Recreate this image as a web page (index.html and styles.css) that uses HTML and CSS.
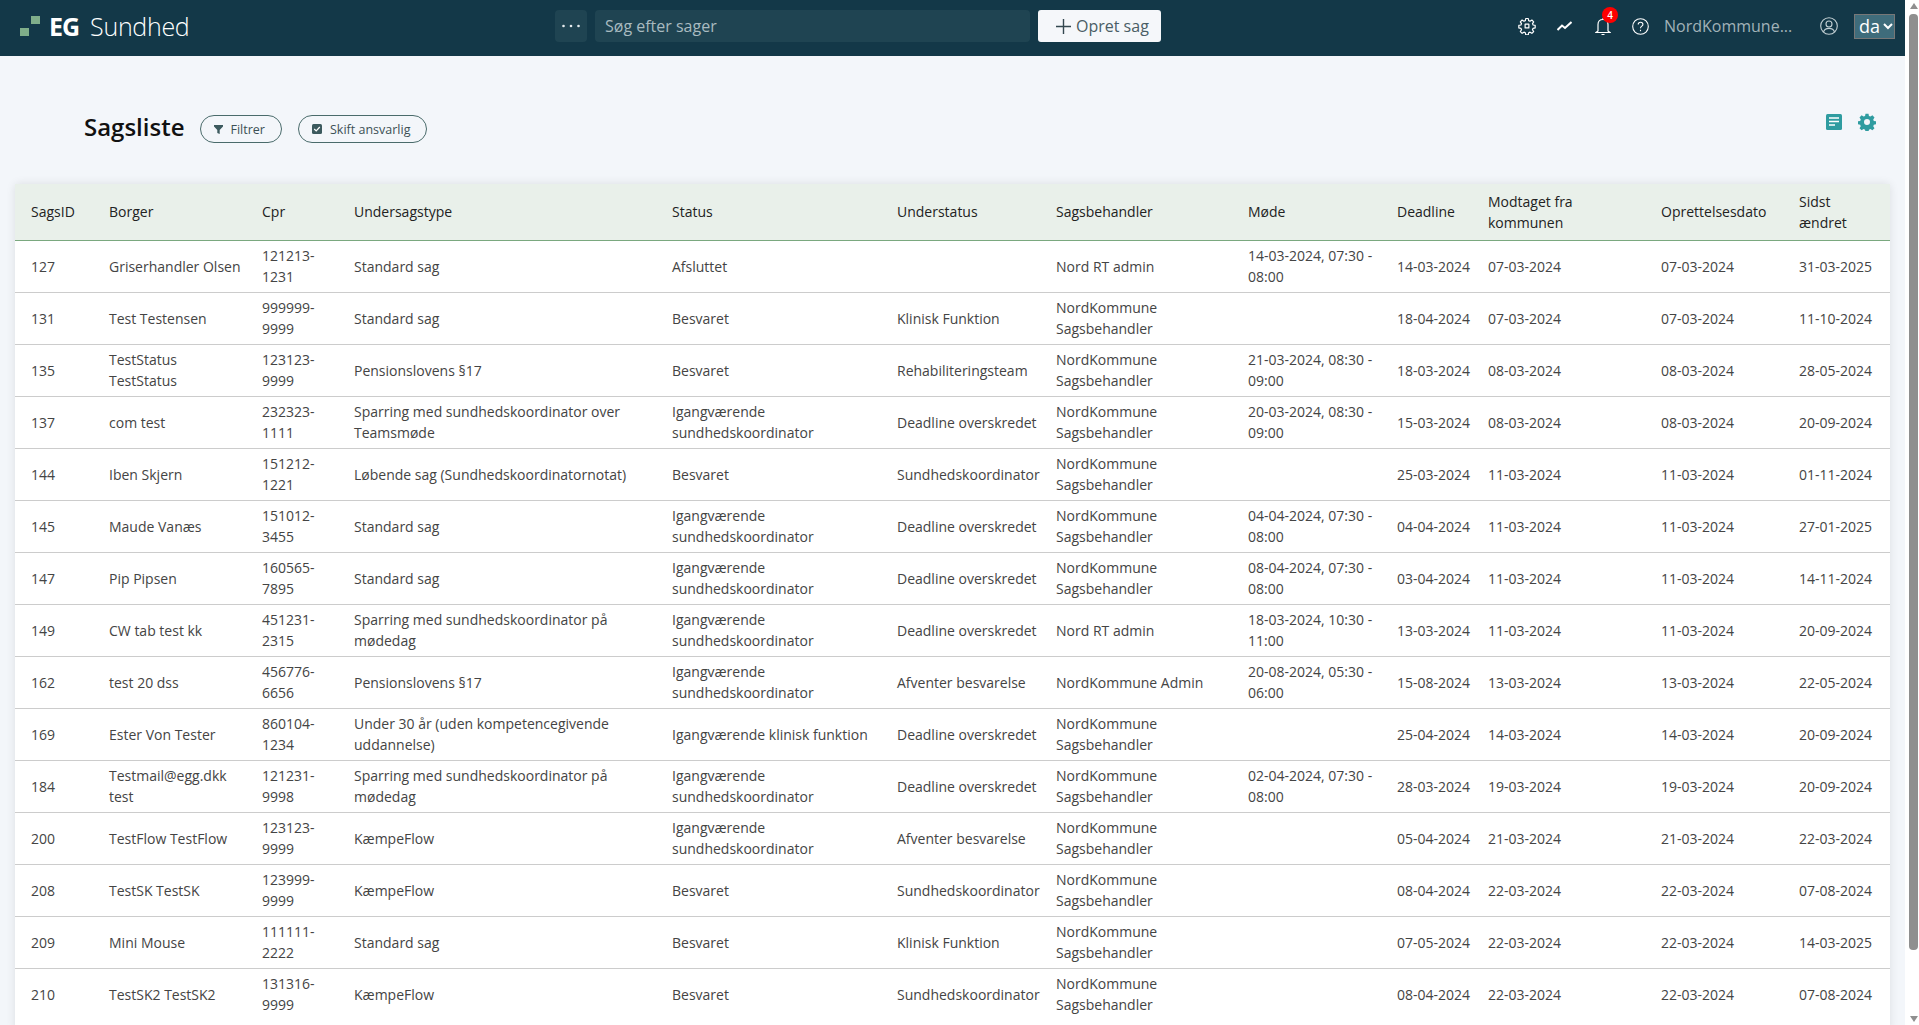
FILE: index.html
```html
<!DOCTYPE html>
<html lang="da">
<head>
    <meta charset="UTF-8">
    <title>Sagsliste</title>
    <link rel="stylesheet" href="styles.css">
</head>
<body>
<div class="app">
    <div class="page">
        <header class="topbar">
            <div class="logo">
                <svg class="logo-mark" width="20" height="20" viewBox="0 0 20 20"><rect x="0" y="12" width="9" height="8" fill="#7fae8a"/><rect x="11" y="0" width="9" height="8" fill="#7fae8a"/></svg>
                <span class="logo-eg">EG</span>
                <span class="logo-name">Sundhed</span>
            </div>
            <div class="search-area">
                <button class="dots">
                    <svg width="18" height="4" viewBox="0 0 18 4" fill="#e6ecee"><circle cx="1.500" cy="2" r="1.300"/><circle cx="9" cy="2" r="1.300"/><circle cx="16.500" cy="2" r="1.300"/></svg>
                </button>
                <div class="search">Søg efter sager</div>
                <button class="create">
                    <svg width="15" height="15" viewBox="0 0 15 15"><path d="M7.5 0v15M0 7.5h15" stroke="#33474f" stroke-width="1.4"/></svg>
                    Opret sag
                </button>
            </div>
            <div class="top-right">
                <svg class="top-icon gear" width="18" height="18" viewBox="0 0 24 24" fill="none" stroke="#fff" stroke-width="1.6" stroke-linejoin="round"><path d="M10.3 2h3.4l.5 2.8 1.9.8 2.4-1.6 2.4 2.4-1.6 2.4.8 1.9 2.8.5v3.4l-2.800.5-.8 1.900 1.600 2.400-2.400 2.400-2.400-1.600-1.900.8-.5 2.800h-3.400l-.5-2.800-1.900-.8-2.400 1.600-2.400-2.400 1.600-2.400-.8-1.900-2.800-.5v-3.400l2.800-.5.8-1.900-1.600-2.400 2.400-2.400 2.400 1.600 1.900-.8z"/><rect x="9.500" y="9.500" width="5" height="5"/></svg>
                <svg class="top-icon trend" width="15" height="10" viewBox="0 0 15 10" fill="none" stroke="#fff" stroke-width="2"><path d="M0.5 9 5 4.500 8 7 14.500 1"/></svg>
                <span class="bell">
                    <svg width="16" height="19" viewBox="0 0 16 19" fill="none" stroke="#fff" stroke-width="1.2"><path d="M3 14V7.500C3 4.500 5 2.500 8 2.500s5 2 5 5V14l2 1.500H1z"/><path d="M6.500 17.500h3M8 1v1.500"/></svg>
                    <span class="badge">4</span>
                </span>
                <svg class="top-icon" width="17" height="17" viewBox="0 0 17 17" fill="none" stroke="#fff" stroke-width="1.1"><circle cx="8.500" cy="8.500" r="7.800"/><path d="M6.200 6.600c0-1.400 1-2.300 2.400-2.300s2.300.9 2.300 2.100c0 1.800-2.400 1.800-2.400 3.800"/><path d="M8.500 11.800v1.400"/></svg>
                <span class="user-name">NordKommune...</span>
                <svg class="top-icon user" width="18" height="18" viewBox="0 0 18 18" fill="none" stroke="#c3d0d4" stroke-width="1.1"><circle cx="9" cy="9" r="8.300"/><circle cx="9" cy="7" r="3"/><path d="M3.500 15c.8-2.600 2.800-3.600 5.500-3.600s4.700 1 5.500 3.600"/></svg>
                <div class="lang">da
                    <svg width="10" height="7" viewBox="0 0 10 7" fill="none" stroke="#fff" stroke-width="2"><path d="M1 1l4 4 4-4"/></svg>
                </div>
            </div>
        </header>

        <main class="content">
            <div class="toolbar">
                <h1>Sagsliste</h1>
                <button class="pill">
                    <svg width="9" height="9" viewBox="0 0 9 9"><path d="M0 0h9v1.500L5.700 5v4L3.300 8V5L0 1.500z" fill="#3c5a5e"/></svg>
                    Filtrer
                </button>
                <button class="pill">
                    <svg width="10" height="10" viewBox="0 0 10 10"><rect width="10" height="10" rx="1.500" fill="#3c5a5e"/><path d="M2.200 5l2 2 3.600-4" fill="none" stroke="#fff" stroke-width="1.200"/></svg>
                    Skift ansvarlig
                </button>
                <div class="tools">
                    <svg width="16" height="16" viewBox="0 0 16 16"><rect width="16" height="16" rx="1.500" fill="#2f9ca0"/><path d="M3 4h10M3 7.500h10M3 11h6" stroke="#fff" stroke-width="1.500"/></svg>
                    <svg width="18" height="18" viewBox="0 0 24 24"><path fill="#2f9ca0" fill-rule="evenodd" d="M10 1h4l.6 3 2 .8 2.600-1.700 2.800 2.800-1.700 2.600.8 2 3 .6v4l-3 .6-.8 2 1.700 2.600-2.800 2.800-2.600-1.700-2 .8-.6 3h-4l-.6-3-2-.8-2.600 1.700-2.800-2.800 1.700-2.600-.8-2-3-.6v-4l3-.6.8-2L2 5.900l2.800-2.800 2.600 1.700 2-.8zM12 8a4 4 0 1 0 0 8 4 4 0 0 0 0-8z"/></svg>
                </div>
            </div>

            <div class="table-card">
                <table class="cases">
                    <colgroup>
                        <col class="c-id"><col class="c-borger"><col class="c-cpr"><col class="c-type"><col class="c-status"><col class="c-sub"><col class="c-handler"><col class="c-meet"><col class="c-deadline"><col class="c-received"><col class="c-created"><col class="c-changed">
                    </colgroup>
                    <thead>
                        <tr><th>SagsID</th><th>Borger</th><th>Cpr</th><th>Undersagstype</th><th>Status</th><th>Understatus</th><th>Sagsbehandler</th><th>Møde</th><th>Deadline</th><th>Modtaget fra kommunen</th><th>Oprettelsesdato</th><th>Sidst ændret</th></tr>
                    </thead>
                    <tbody>
                        <tr><td>127</td><td>Griserhandler Olsen</td><td>121213-1231</td><td>Standard sag</td><td>Afsluttet</td><td></td><td>Nord RT admin</td><td>14-03-2024, 07:30 - 08:00</td><td>14-03-2024</td><td>07-03-2024</td><td>07-03-2024</td><td>31-03-2025</td></tr>
                        <tr><td>131</td><td>Test Testensen</td><td>999999-9999</td><td>Standard sag</td><td>Besvaret</td><td>Klinisk Funktion</td><td>NordKommune Sagsbehandler</td><td></td><td>18-04-2024</td><td>07-03-2024</td><td>07-03-2024</td><td>11-10-2024</td></tr>
                        <tr><td>135</td><td>TestStatus TestStatus</td><td>123123-9999</td><td>Pensionslovens §17</td><td>Besvaret</td><td>Rehabiliteringsteam</td><td>NordKommune Sagsbehandler</td><td>21-03-2024, 08:30 - 09:00</td><td>18-03-2024</td><td>08-03-2024</td><td>08-03-2024</td><td>28-05-2024</td></tr>
                        <tr><td>137</td><td>com test</td><td>232323-1111</td><td>Sparring med sundhedskoordinator over Teamsmøde</td><td>Igangværende sundhedskoordinator</td><td>Deadline overskredet</td><td>NordKommune Sagsbehandler</td><td>20-03-2024, 08:30 - 09:00</td><td>15-03-2024</td><td>08-03-2024</td><td>08-03-2024</td><td>20-09-2024</td></tr>
                        <tr><td>144</td><td>Iben Skjern</td><td>151212-1221</td><td>Løbende sag (Sundhedskoordinatornotat)</td><td>Besvaret</td><td>Sundhedskoordinator</td><td>NordKommune Sagsbehandler</td><td></td><td>25-03-2024</td><td>11-03-2024</td><td>11-03-2024</td><td>01-11-2024</td></tr>
                        <tr><td>145</td><td>Maude Vanæs</td><td>151012-3455</td><td>Standard sag</td><td>Igangværende sundhedskoordinator</td><td>Deadline overskredet</td><td>NordKommune Sagsbehandler</td><td>04-04-2024, 07:30 - 08:00</td><td>04-04-2024</td><td>11-03-2024</td><td>11-03-2024</td><td>27-01-2025</td></tr>
                        <tr><td>147</td><td>Pip Pipsen</td><td>160565-7895</td><td>Standard sag</td><td>Igangværende sundhedskoordinator</td><td>Deadline overskredet</td><td>NordKommune Sagsbehandler</td><td>08-04-2024, 07:30 - 08:00</td><td>03-04-2024</td><td>11-03-2024</td><td>11-03-2024</td><td>14-11-2024</td></tr>
                        <tr><td>149</td><td>CW tab test kk</td><td>451231-2315</td><td>Sparring med sundhedskoordinator på mødedag</td><td>Igangværende sundhedskoordinator</td><td>Deadline overskredet</td><td>Nord RT admin</td><td>18-03-2024, 10:30 - 11:00</td><td>13-03-2024</td><td>11-03-2024</td><td>11-03-2024</td><td>20-09-2024</td></tr>
                        <tr><td>162</td><td>test 20 dss</td><td>456776-6656</td><td>Pensionslovens §17</td><td>Igangværende sundhedskoordinator</td><td>Afventer besvarelse</td><td>NordKommune Admin</td><td>20-08-2024, 05:30 - 06:00</td><td>15-08-2024</td><td>13-03-2024</td><td>13-03-2024</td><td>22-05-2024</td></tr>
                        <tr><td>169</td><td>Ester Von Tester</td><td>860104-1234</td><td>Under 30 år (uden kompetencegivende uddannelse)</td><td>Igangværende klinisk funktion</td><td>Deadline overskredet</td><td>NordKommune Sagsbehandler</td><td></td><td>25-04-2024</td><td>14-03-2024</td><td>14-03-2024</td><td>20-09-2024</td></tr>
                        <tr><td>184</td><td>Testmail@egg.dkk test</td><td>121231-9998</td><td>Sparring med sundhedskoordinator på mødedag</td><td>Igangværende sundhedskoordinator</td><td>Deadline overskredet</td><td>NordKommune Sagsbehandler</td><td>02-04-2024, 07:30 - 08:00</td><td>28-03-2024</td><td>19-03-2024</td><td>19-03-2024</td><td>20-09-2024</td></tr>
                        <tr><td>200</td><td>TestFlow TestFlow</td><td>123123-9999</td><td>KæmpeFlow</td><td>Igangværende sundhedskoordinator</td><td>Afventer besvarelse</td><td>NordKommune Sagsbehandler</td><td></td><td>05-04-2024</td><td>21-03-2024</td><td>21-03-2024</td><td>22-03-2024</td></tr>
                        <tr><td>208</td><td>TestSK TestSK</td><td>123999-9999</td><td>KæmpeFlow</td><td>Besvaret</td><td>Sundhedskoordinator</td><td>NordKommune Sagsbehandler</td><td></td><td>08-04-2024</td><td>22-03-2024</td><td>22-03-2024</td><td>07-08-2024</td></tr>
                        <tr><td>209</td><td>Mini Mouse</td><td>111111-2222</td><td>Standard sag</td><td>Besvaret</td><td>Klinisk Funktion</td><td>NordKommune Sagsbehandler</td><td></td><td>07-05-2024</td><td>22-03-2024</td><td>22-03-2024</td><td>14-03-2025</td></tr>
                        <tr><td>210</td><td>TestSK2 TestSK2</td><td>131316-9999</td><td>KæmpeFlow</td><td>Besvaret</td><td>Sundhedskoordinator</td><td>NordKommune Sagsbehandler</td><td></td><td>08-04-2024</td><td>22-03-2024</td><td>22-03-2024</td><td>07-08-2024</td></tr>
                    </tbody>
                </table>
            </div>
        </main>
    </div>
    <div class="scrollbar">
        <span class="arrow-up"></span>
        <span class="thumb"></span>
        <span class="arrow-down"></span>
    </div>
</div>
</body>
</html>
```
FILE: styles.css
```css
* {
    box-sizing: border-box;
    margin: 0;
    padding: 0;
}
html, body {
    height: 100%;
    overflow: hidden;
}
body {
    font-family: "Open Sans", sans-serif;
    font-size: 14px;
    background-color: #f3f6fa;
    color: #444;
}
button {
    font-family: inherit;
    border: 0;
}
.app {
    display: flex;
    height: 100vh;
}
.page {
    flex: 1;
    min-width: 0;
    overflow: hidden;
}

/* top bar */
.topbar {
    display: flex;
    align-items: center;
    height: 56px;
    padding-bottom: 4px;
    background-color: #133848;
    color: white;
}
.logo {
    display: flex;
    align-items: center;
    width: 555px;
    padding-left: 20px;
}
.logo-mark {
    margin-right: 9px;
}
.logo-eg {
    font-size: 25px;
    font-weight: 700;
    margin-right: 11px;
    letter-spacing: -1px;
}
.logo-name {
    font-size: 25px;
    font-weight: 300;
    letter-spacing: -0.3px;
}
.search-area {
    display: flex;
    gap: 8px;
    height: 32px;
}
.dots {
    display: flex;
    align-items: center;
    justify-content: center;
    width: 32px;
    background-color: #1f4452;
    border-radius: 4px;
}
.search {
    width: 435px;
    padding-left: 10px;
    background-color: #1f4452;
    border-radius: 4px;
    color: #a9bbc0;
    font-size: 16px;
    line-height: 32px;
}
.create {
    display: flex;
    align-items: center;
    gap: 5px;
    width: 123px;
    padding-left: 18px;
    background-color: #f5f7fa;
    border-radius: 3px;
    color: #4a5d65;
    font-size: 16px;
}
.top-right {
    display: flex;
    align-items: center;
    margin-left: 357px;
}
.top-icon {
    display: block;
}
.trend {
    margin-left: 21px;
}
.bell {
    position: relative;
    display: block;
    margin-left: 23px;
    height: 19px;
}
.badge {
    position: absolute;
    top: -10px;
    left: 7px;
    width: 16px;
    height: 16px;
    border-radius: 50%;
    background-color: #f00;
    color: white;
    font-size: 10px;
    font-weight: 600;
    line-height: 16px;
    text-align: center;
}
.bell + .top-icon {
    margin-left: 21px;
}
.user-name {
    margin-left: 15px;
    color: #a1b2b8;
    font-size: 16px;
    font-weight: 500;
    width: 156px;
}
.lang {
    display: flex;
    align-items: center;
    gap: 3px;
    width: 41px;
    height: 25px;
    margin-left: 16px;
    padding-left: 4px;
    background-color: #3f6c7b;
    border: 1px solid #777;
    font-size: 18px;
    white-space: nowrap;
}

/* page content */
.toolbar {
    display: flex;
    align-items: center;
    height: 128px;
    padding: 18px 29px 0 84px;
}
.toolbar h1 {
    color: #111;
    font-size: 24px;
    font-weight: 600;
    margin-right: 15px;
    margin-bottom: 5px;
}
.pill {
    display: flex;
    align-items: center;
    gap: 8px;
    height: 28px;
    padding: 0 16px 0 13px;
    border: 1px solid #4a6b6b;
    border-radius: 14px;
    background: transparent;
    color: #3c5055;
    font-size: 12.5px;
    margin-right: 16px;
}
.tools {
    display: flex;
    align-items: center;
    gap: 16px;
    margin-left: auto;
    margin-top: -15px;
}
.table-card {
    margin: 0 15px;
    padding-bottom: 10px;
    background-color: white;
    border-radius: 4px 4px 0 0;
    box-shadow: 0 0 10px rgba(0,0,0,0.1);
}
.cases {
    width: 100%;
    table-layout: fixed;
    border-collapse: collapse;
    line-height: 21px;
}
.c-id { width: 78px; }
.c-borger { width: 153px; }
.c-cpr { width: 92px; }
.c-type { width: 318px; }
.c-status { width: 225px; }
.c-sub { width: 159px; }
.c-handler { width: 192px; }
.c-meet { width: 149px; }
.c-deadline { width: 91px; }
.c-received { width: 173px; }
.c-created { width: 138px; }
.c-changed { width: 107px; }
.cases th {
    height: 56px;
    padding: 0 16px;
    background-color: #e9f0ea;
    border-bottom: 1px solid #7aa87f;
    color: #222;
    font-weight: 400;
    text-align: left;
}
.cases td {
    height: 52px;
    padding: 0 0 0 16px;
    border-bottom: 1px solid #ccc;
    vertical-align: middle;
}
.cases tbody tr:last-child td {
    border-bottom: 0;
}

/* scrollbar */
.scrollbar {
    display: flex;
    flex-direction: column;
    align-items: center;
    width: 14px;
    background-color: white;
    padding-left: 3px;
}
.thumb {
    flex: 1;
    width: 9px;
    background-color: #8f8f8f;
    border-radius: 4px;
    margin: 5px 0 66px;
}
.arrow-up {
    margin-top: 3px;
    border-left: 4.5px solid transparent;
    border-right: 4.5px solid transparent;
    border-bottom: 6px solid #8f8f8f;
}
.arrow-down {
    margin-bottom: 3px;
    border-left: 4.5px solid transparent;
    border-right: 4.5px solid transparent;
    border-top: 6px solid #8f8f8f;
}
```
